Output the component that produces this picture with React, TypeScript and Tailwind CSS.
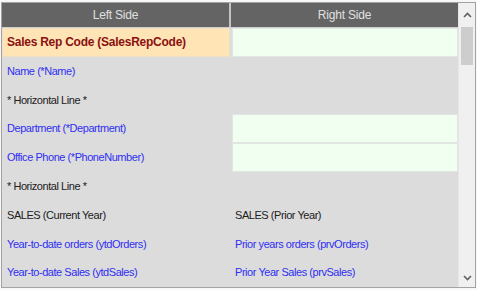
import React from 'react';

type Cell = {
  text?: string;
  tone?: 'key' | 'field' | 'plain';
  box?: 'key' | 'input';
};

type Row = { left: Cell; right: Cell };

const rows: Row[] = [
  {
    left: { text: 'Sales Rep Code (SalesRepCode)', tone: 'key', box: 'key' },
    right: { box: 'input' },
  },
  { left: { text: 'Name (*Name)', tone: 'field' }, right: {} },
  { left: { text: '* Horizontal Line *', tone: 'plain' }, right: {} },
  {
    left: { text: 'Department (*Department)', tone: 'field' },
    right: { box: 'input' },
  },
  {
    left: { text: 'Office Phone (*PhoneNumber)', tone: 'field' },
    right: { box: 'input' },
  },
  { left: { text: '* Horizontal Line *', tone: 'plain' }, right: {} },
  {
    left: { text: 'SALES (Current Year)', tone: 'plain' },
    right: { text: 'SALES (Prior Year)', tone: 'plain' },
  },
  {
    left: { text: 'Year-to-date orders (ytdOrders)', tone: 'field' },
    right: { text: 'Prior years orders (prvOrders)', tone: 'field' },
  },
  {
    left: { text: 'Year-to-date Sales (ytdSales)', tone: 'field' },
    right: { text: 'Prior Year Sales (prvSales)', tone: 'field' },
  },
];

const toneClass = (tone?: Cell['tone']) => {
  switch (tone) {
    case 'key':
      return 'text-[12px] font-bold tracking-[-0.25px] text-[#8b1010]';
    case 'field':
      return 'text-[11px] tracking-[-0.45px] text-[#2f2ff2]';
    default:
      return 'text-[11px] tracking-[-0.45px] text-[#202020]';
  }
};

const boxClass = (box?: Cell['box']) => {
  switch (box) {
    case 'key':
      return 'bg-[#ffe4b5] border border-[#efe0c4]';
    case 'input':
      return 'bg-[#f0fff0] border border-[#e2e6e2]';
    default:
      return 'border border-transparent';
  }
};

const GridCell = ({ cell, side }: { cell: Cell; side: 'left' | 'right' }) => (
  <div
    className={`flex-1 flex items-center min-w-0 ${boxClass(cell.box)} ${
      side === 'left' ? 'pl-[4px]' : 'pl-[2px]'
    }`}
  >
    {cell.text && (
      <span className={`whitespace-nowrap ${toneClass(cell.tone)}`}>
        {cell.text}
      </span>
    )}
  </div>
);

const ScrollBar = () => (
  <div className="w-[17px] flex flex-col bg-[#f0f0f0] border-l border-[#e6e6e6]">
    <div className="h-[17px] flex items-center justify-center mt-[3px]">
      <svg width="9" height="6" viewBox="0 0 9 6">
        <path d="M1 5 L4.5 1.5 L8 5" stroke="#606060" strokeWidth="1.6" fill="none" />
      </svg>
    </div>
    <div className="mx-[2px] mt-[4px] h-[38px] bg-[#cdcdcd]" />
    <div className="flex-1" />
    <div className="h-[17px] flex items-center justify-center mb-[1px]">
      <svg width="9" height="6" viewBox="0 0 9 6">
        <path d="M1 1 L4.5 4.5 L8 1" stroke="#606060" strokeWidth="1.6" fill="none" />
      </svg>
    </div>
  </div>
);

const App = () => {
  return (
    <div
      className="w-[477px] h-[290px] bg-[#f7f7f7] pt-[2px] pl-[1px] pr-[1px] pb-[2px]"
      style={{ fontFamily: '"Liberation Sans", Arial, sans-serif' }}
    >
      <div className="h-full flex border border-[#a3a3a3] bg-[#dcdcdc]">
        <div className="flex-1 flex flex-col min-w-0">
          <div className="h-[25px] flex bg-[#646464] border-b border-[#d0d0d0]">
            <div className="flex-1 flex items-center justify-center text-[12px] tracking-[-0.2px] text-[#e0e0e0] border-r-2 border-[#c4c4c4]">
              Left Side
            </div>
            <div className="flex-1 flex items-center justify-center text-[12px] tracking-[-0.2px] text-[#e0e0e0]">
              Right Side
            </div>
          </div>
          <div className="flex-1 flex flex-col">
            {rows.map((row, i) => (
              <div key={i} className="flex-1 flex gap-[2px]">
                <GridCell cell={row.left} side="left" />
                <GridCell cell={row.right} side="right" />
              </div>
            ))}
          </div>
        </div>
        <ScrollBar />
      </div>
    </div>
  );
};

export default App;
